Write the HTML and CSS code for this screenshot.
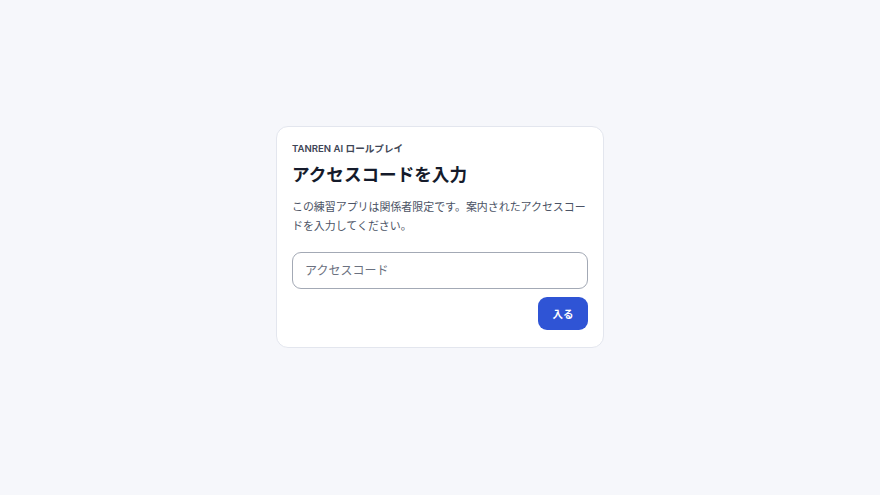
FILE: index.html
```html
<!DOCTYPE html>
<html lang="ja">

<head>
    <meta charset="UTF-8">
    <meta name="viewport" content="width=device-width, initial-scale=1.0">
    <title>アクセスコードを入力</title>
    <link rel="stylesheet" href="styles.css">
</head>

<body>
    <div class="page">
        <form class="card" action="">
            <p class="eyebrow">TANREN AI ロールプレイ</p>
            <h1 class="title">アクセスコードを入力</h1>
            <p class="desc">この練習アプリは関係者限定です。案内されたアクセスコードを入力してください。</p>
            <input type="password" name="code" class="code-input" placeholder="アクセスコード" />
            <div class="actions">
                <button type="button" class="enter">入る</button>
            </div>
        </form>
    </div>
</body>

</html>
```

FILE: styles.css
```css
* {
    box-sizing: border-box;
    margin: 0;
    padding: 0;
}

body {
    background: #f6f7fb;
    font-family: Inter, "Noto Sans CJK JP", sans-serif;
    color: #111827;
}

.page {
    min-height: 100vh;
    display: flex;
    justify-content: center;
    align-items: center;
    padding-bottom: 22px;
}

.card {
    width: 328px;
    background: #fff;
    border: 1px solid #e3e6ee;
    border-radius: 12px;
    padding: 16px 15px 17px;
    display: flex;
    flex-direction: column;
}

.eyebrow {
    font-size: 9.6px;
    line-height: 12px;
    font-weight: 600;
    color: #3f4656;
}

.title {
    margin-top: 7px;
    font-size: 17.6px;
    line-height: 26px;
    font-weight: 700;
    color: #151b2b;
}

.desc {
    margin-top: 10px;
    font-size: 10.95px;
    line-height: 19px;
    color: #4b5365;
}

.code-input {
    margin-top: 16px;
    height: 37px;
    width: 100%;
    border: 1px solid #a3a9b5;
    border-radius: 9px;
    padding: 0 12px;
    font-family: inherit;
    font-size: 12px;
    color: #111827;
    background: #fff;
    outline: none;
}

.code-input::placeholder {
    color: #6b7180;
}

.actions {
    display: flex;
    justify-content: flex-end;
    margin-top: 8px;
}

.enter {
    width: 50px;
    height: 33px;
    border: none;
    border-radius: 9px;
    background: #2f54d5;
    color: #fff;
    font-family: inherit;
    font-size: 10.5px;
    font-weight: 700;
    cursor: pointer;
}
```
